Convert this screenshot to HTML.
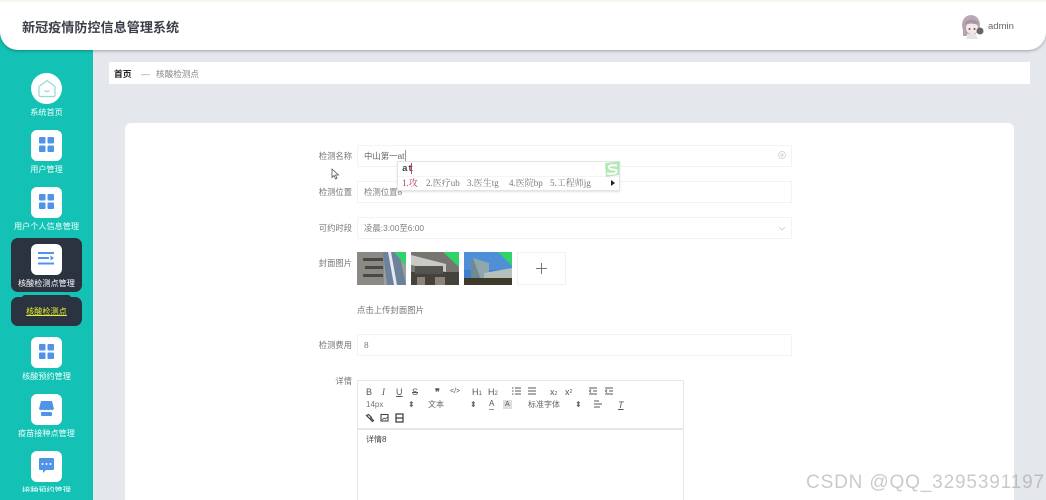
<!DOCTYPE html>
<html lang="zh"><head><meta charset="utf-8"><title>新冠疫情防控信息管理系统</title>
<style>
*{box-sizing:border-box;margin:0;padding:0}
html,body{width:1046px;height:500px;overflow:hidden;background:#e4e7ec}
body{position:relative;font-family:"Liberation Sans","Noto Sans CJK SC",sans-serif;color:#666}
div,span,svg{position:absolute}
#w{left:0;top:0;width:1046px;height:500px;overflow:hidden;filter:blur(.35px)}
.t{white-space:nowrap;line-height:12px}
.side{left:0;top:0;width:93px;height:500px;background:#14c2b5}
.hd{left:0;top:2px;width:1046px;height:48px;background:#fff;border-radius:0 0 18px 18px;box-shadow:0 1px 3px rgba(0,0,0,.3)}
.box{left:31px;width:31px;height:31px;background:#fff;border-radius:6px}
.lb{left:0;width:93px;text-align:center;color:#f2fffd;font-size:8.150px}
.lab{width:60px;left:292px;text-align:right;font-size:8.300px;color:#777}
.inp{left:357px;width:435px;height:22px;background:#fff;border:1px solid #f2f3f5}
.v{left:364px;font-size:8.400px;color:#808080}
.tb{font-size:8px;color:#666}
.ic{color:#555;font-size:9px;font-weight:normal}
</style></head><body><div id="w">
<div class="side"></div>
<div class="hd"></div>
<div style="left:0;top:0;width:1046px;height:2px;background:#f7f6ee"></div>
<div class="t" style="left:22px;top:20px;font-size:13.100px;line-height:16px;font-weight:bold;color:#3a3f47">新冠疫情防控信息管理系统</div>
<svg style="left:961px;top:14px" width="24" height="25" viewBox="0 0 24 25">
<ellipse cx="10" cy="11" rx="9" ry="10" fill="#b9a9b4"/><rect x="2" y="10" width="4" height="12" fill="#b3a3ae"/><ellipse cx="11" cy="14" rx="6" ry="6" fill="#f5e8e6"/><path d="M4 8q6-5 13 0v3q-7-3-13 0z" fill="#a796a4"/><circle cx="19" cy="17" r="3.500" fill="#6a646a"/><path d="M7 20h8l2 5H5z" fill="#e9e3e6"/><circle cx="8.500" cy="15" r="1" fill="#6b5560"/><circle cx="13.500" cy="15" r="1" fill="#6b5560"/>
</svg>
<div class="t" style="left:988px;top:21px;font-size:9.500px;color:#666">admin</div>

<div style="left:109px;top:62px;width:921px;height:22px;background:#fff"></div>
<div class="t" style="left:114px;top:68px;font-size:8.800px;font-weight:bold;color:#222">首页</div>
<div class="t" style="left:141px;top:68px;font-size:9px;color:#999">—</div>
<div class="t" style="left:156px;top:68px;font-size:8.600px;color:#888">核酸检测点</div>

<div style="left:125px;top:123px;width:889px;height:400px;background:#fff;border-radius:6px"></div>

<!-- sidebar -->
<div style="left:11px;top:238px;width:71px;height:54px;background:#2b3240;border-radius:7px"></div>
<div style="left:11px;top:297px;width:71px;height:29px;background:#2b3240;border-radius:7px"></div>
<div style="left:22px;top:295px;width:49px;height:4px;background:#2b3240;border-radius:3px 3px 0 0"></div>

<div class="box" style="top:73px;border-radius:50%"></div>
<svg style="left:37px;top:79px" width="20" height="19" viewBox="0 0 20 19" fill="none" stroke="#8fdcd2" stroke-width="1.200"><path d="M2 7.500 10 1.500l8 6v8.500a1.500 1.500 0 0 1-1.500 1.500h-13A1.500 1.500 0 0 1 2 16z"/><path d="M7.500 11.500q2.500 2 5 0"/></svg>
<div class="t lb" style="top:107px">系统首页</div>

<div class="box" style="top:130px"></div>
<svg style="left:39px;top:137px" width="15" height="16" viewBox="0 0 15 16" fill="#4f94e6"><rect width="6.500" height="6.500" rx="1"/><rect x="8.500" width="6.500" height="6.500" rx="1"/><rect y="8.500" width="6.500" height="6.500" rx="1"/><rect x="8.500" y="8.500" width="6.500" height="6.500" rx="1"/></svg>
<div class="t lb" style="top:164px">用户管理</div>

<div class="box" style="top:187px"></div>
<svg style="left:39px;top:194px" width="15" height="16" viewBox="0 0 15 16" fill="#4f94e6"><rect width="6.500" height="6.500" rx="1"/><rect x="8.500" width="6.500" height="6.500" rx="1"/><rect y="8.500" width="6.500" height="6.500" rx="1"/><rect x="8.500" y="8.500" width="6.500" height="6.500" rx="1"/></svg>
<div class="t lb" style="top:221px">用户个人信息管理</div>

<div class="box" style="top:244px"></div>
<svg style="left:38px;top:252px" width="17" height="14" viewBox="0 0 17 14" fill="#4f94e6"><rect y="0" width="16" height="2"/><rect y="5" width="11" height="2"/><path d="M12.500 3.500 16 6l-3.500 2.500z"/><rect y="10.500" width="16" height="2"/></svg>
<div class="t lb" style="top:278px;color:#fff">核酸检测点管理</div>
<div class="t lb" style="top:306px;color:#e6f02f;text-decoration:underline">核酸检测点</div>

<div class="box" style="top:337px"></div>
<svg style="left:39px;top:344px" width="15" height="16" viewBox="0 0 15 16" fill="#4f94e6"><rect width="6.500" height="6.500" rx="1"/><rect x="8.500" width="6.500" height="6.500" rx="1"/><rect y="8.500" width="6.500" height="6.500" rx="1"/><rect x="8.500" y="8.500" width="6.500" height="6.500" rx="1"/></svg>
<div class="t lb" style="top:371px">核酸预约管理</div>

<div class="box" style="top:394px"></div>
<svg style="left:39px;top:401px" width="15" height="16" viewBox="0 0 15 16" fill="#4f94e6"><path d="M2 0h11l2 8q-2 2-4 .500-2 1.500-3.500 0-1.500 1.500-3.500 0-2 1.500-4-.500z"/><rect x="2" y="11" width="11" height="4" rx="1"/></svg>
<div class="t lb" style="top:428px">疫苗接种点管理</div>

<div class="box" style="top:451px"></div>
<svg style="left:39px;top:458px" width="15" height="16" viewBox="0 0 15 16"><path d="M1 0h13a1 1 0 0 1 1 1v10a1 1 0 0 1-1 1H7l-3 3v-3H1a1 1 0 0 1-1-1V1a1 1 0 0 1 1-1z" fill="#4f94e6"/><circle cx="3.500" cy="6" r="1" fill="#fff"/><circle cx="7.500" cy="6" r="1" fill="#fff"/><circle cx="11.500" cy="6" r="1" fill="#fff"/></svg>
<div class="t lb" style="top:485px;height:7px;overflow:hidden;line-height:11px">接种预约管理</div>

<!-- form -->
<div class="t lab" style="top:150px">检测名称</div>
<div class="inp" style="top:145px"></div>
<div class="t v" style="top:150px;color:#666">中山第一at</div>
<div style="left:405px;top:150px;width:1px;height:11px;background:#999"></div>
<svg style="left:778px;top:151px" width="8" height="8" viewBox="0 0 8 8" fill="none" stroke="#ccc" stroke-width=".8"><circle cx="4" cy="4" r="3.500"/><circle cx="4" cy="4" r="1.200"/></svg>
<svg style="left:331px;top:168px" width="9" height="12" viewBox="0 0 9 12" fill="#fff" stroke="#555" stroke-width=".8"><path d="M1 1v8.500l2-2 1.500 3.500 1.500-.7L4.500 7H7.500z"/></svg>

<div class="t lab" style="top:186px">检测位置</div>
<div class="inp" style="top:181px"></div>
<div class="t v" style="top:186px">检测位置8</div>

<div class="t lab" style="top:222px">可约时段</div>
<div class="inp" style="top:217px"></div>
<div class="t v" style="top:222px">凌晨:3:00至6:00</div>
<svg style="left:778px;top:226px" width="8" height="5" viewBox="0 0 8 5" fill="none" stroke="#ccc" stroke-width=".8"><path d="M1 1l3 3 3-3"/></svg>

<div class="t lab" style="top:257px">封面图片</div>
<svg style="left:357px;top:252px" width="49" height="33" viewBox="0 0 49 33"><rect width="49" height="33" fill="#a09e9a"/><rect y="0" width="27" height="33" fill="#8c8883"/><path d="M6 6h20v3H6zM8 14h18v3H8zM6 22h20v3H6z" fill="#4a4846"/><path d="M26 0h16l7 33H30z" fill="#6b819c"/><path d="M31 0l6 33h3L34 0z" fill="#e6e9ee"/><path d="M37 0h12v14z" fill="#2fd36a"/></svg>
<svg style="left:411px;top:252px" width="48" height="33" viewBox="0 0 48 33"><rect width="48" height="33" fill="#77756f"/><path d="M0 3 35 12v8L0 13z" fill="#c9cac6"/><path d="M0 20h48v13H0z" fill="#45423c"/><path d="M4 14h28v8H4z" fill="#55534f"/><path d="M6 25h8v8H6zM24 25h10v8H24z" fill="#8a8578"/><path d="M32 0h16v15z" fill="#2fd36a"/></svg>
<svg style="left:464px;top:252px" width="48" height="33" viewBox="0 0 48 33"><rect width="48" height="33" fill="#3f7fd0"/><path d="M0 0h48v18H0z" fill="#4f8fd8"/><path d="M7 8h10l2 20H7z" fill="#6f8a90"/><path d="M9 6l16 5v17H17z" fill="#8ea6ac"/><path d="M20 21l28-5v13H20z" fill="#b5c0bc"/><path d="M0 26h48v7H0z" fill="#3d3a2a"/><path d="M34 0h14v14z" fill="#2fd36a"/></svg>
<div style="left:517px;top:252px;width:49px;height:33px;background:#fff;border:1px solid #f0f1f3"></div>
<div style="left:536px;top:268px;width:11px;height:1px;background:#777"></div>
<div style="left:541px;top:263px;width:1px;height:11px;background:#777"></div>

<div class="t" style="left:357px;top:304px;font-size:8.400px;color:#777">点击上传封面图片</div>

<div class="t lab" style="top:339px">检测费用</div>
<div class="inp" style="top:334px"></div>
<div class="t v" style="top:339px">8</div>

<div class="t lab" style="top:375px">详情</div>

<!-- editor -->
<div style="left:357px;top:380px;width:327px;height:130px;background:#fff;border:1px solid #e6e7ea"></div>
<div style="left:358px;top:428px;width:325px;height:1.500px;background:#e6e7e9"></div>
<div class="t ic" style="left:366px;top:386px">B</div>
<div class="t ic" style="left:382px;top:386px;font-style:italic;font-family:'Liberation Serif',serif">I</div>
<div class="t ic" style="left:396px;top:386px;text-decoration:underline">U</div>
<div class="t ic" style="left:412px;top:386px;text-decoration:line-through">S</div>
<div class="t ic" style="left:435px;top:386px;font-weight:bold">❞</div>
<div class="t ic" style="left:450px;top:386px;font-size:7px">&lt;/&gt;</div>
<div class="t ic" style="left:472px;top:386px">H<span style="position:static;font-size:6px">1</span></div>
<div class="t ic" style="left:488px;top:386px">H<span style="position:static;font-size:6px">2</span></div>
<svg style="left:512px;top:387px" width="24" height="9" viewBox="0 0 24 9" stroke="#555" stroke-width=".9"><path d="M3 1h6M3 4h6M3 7h6M0 1h1.500M0 4h1.500M0 7h1.500M16 1h8M16 4h8M16 7h8"/></svg>
<div class="t ic" style="left:550px;top:386px">x<span style="position:static;font-size:5px">2</span></div>
<div class="t ic" style="left:565px;top:386px">x<span style="position:static;font-size:5px;vertical-align:top">2</span></div>
<svg style="left:589px;top:387px" width="24" height="9" viewBox="0 0 24 9" stroke="#555" stroke-width=".9" fill="none"><path d="M0 1h8M4 4h4M0 7h8M2 2.500 0.500 4 2 5.500M16 1h8M20 4h4M16 7h8M18 2.500 16.500 4 18 5.500"/></svg>

<div class="t tb" style="left:366px;top:399px;color:#777">14px</div>
<div class="t tb" style="left:408px;top:399px">⬍</div>
<div class="t tb" style="left:428px;top:399px">文本</div>
<div class="t tb" style="left:470px;top:399px">⬍</div>
<div class="t ic" style="left:489px;top:399px;font-size:8px;border-bottom:1px solid #999;line-height:10px">A</div>
<div class="t ic" style="left:503px;top:400px;font-size:7px;background:#ddd;padding:0 2px;line-height:9px">A</div>
<div class="t tb" style="left:528px;top:399px">标准字体</div>
<div class="t tb" style="left:575px;top:399px">⬍</div>
<svg style="left:594px;top:400px" width="9" height="9" viewBox="0 0 9 9" stroke="#555" stroke-width=".9"><path d="M0 1h5M0 4h8M0 7h6"/></svg>
<div class="t ic" style="left:618px;top:399px;font-style:italic;text-decoration:underline">T</div>

<svg style="left:365px;top:413px" width="40" height="10" viewBox="0 0 40 10" fill="none" stroke="#444"><path d="M1.500 2.500l2-1 3 3-1 2zM4 5l3.500 3.500 1-1-3-3" stroke-width="1.200"/><rect x="16" y="1.500" width="7" height="6.500" stroke-width="1.100"/><path d="M17 7l2-2 1.500 1 2-2" stroke-width=".8"/><rect x="31" y="1" width="7" height="8" stroke-width="1.300"/><path d="M31 5h7" stroke-width="1.300"/></svg>

<div class="t" style="left:366px;top:434px;font-size:8px;color:#444">详情8</div>

<!-- IME popup -->
<div style="left:397px;top:161px;width:223px;height:30px;background:#fff;border:1px solid #e2e4e6;box-shadow:0 1px 2px rgba(0,0,0,.12)"></div>
<div class="t" style="left:402px;top:163px;font-size:9.500px;font-weight:bold;color:#444;font-family:'Liberation Mono',monospace">at</div>
<div style="left:411px;top:163px;width:1px;height:11px;background:#d04060"></div>
<div style="left:398px;top:176px;width:221px;height:1px;background:#f3f4f5"></div>
<div class="t" style="left:402px;top:177px;font-size:9px;color:#b03a55;font-family:'Liberation Serif','Noto Serif CJK SC',serif">1.攻</div>
<div class="t" style="left:426px;top:177px;font-size:9px;color:#777;font-family:'Liberation Serif','Noto Serif CJK SC',serif">2.医疗ub</div>
<div class="t" style="left:467px;top:177px;font-size:9px;color:#777;font-family:'Liberation Serif','Noto Serif CJK SC',serif">3.医生tg</div>
<div class="t" style="left:509px;top:177px;font-size:9px;color:#777;font-family:'Liberation Serif','Noto Serif CJK SC',serif">4.医院bp</div>
<div class="t" style="left:550px;top:177px;font-size:9px;color:#777;font-family:'Liberation Serif','Noto Serif CJK SC',serif">5.工程师jg</div>
<svg style="left:603px;top:161px" width="18" height="17" viewBox="0 0 18 17"><path d="M2 2 17 0.500 16 14 3 16z" fill="#b5e8b5"/><path d="M14 4.500Q6 3.500 6 6t4 2.500 3.500 2.500T4 12.500" fill="none" stroke="#fff" stroke-width="2"/></svg>
<svg style="left:610px;top:179px" width="6" height="8" viewBox="0 0 6 8"><path d="M1 1l4 3-4 3z" fill="#222"/></svg>

<div class="t" style="left:806px;top:472px;font-size:19px;line-height:22px;color:rgba(150,150,150,.5);letter-spacing:.85px;font-family:'Liberation Sans',sans-serif">CSDN @QQ_3295391197</div>
</div></body></html>
